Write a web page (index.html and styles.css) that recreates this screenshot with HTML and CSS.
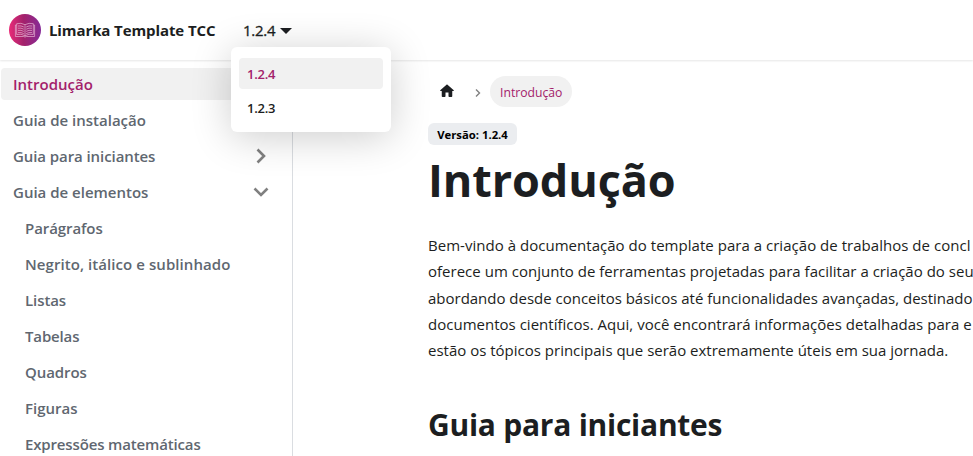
FILE: index.html
```html
<!DOCTYPE html>
<html lang="pt-BR">
<head>
<meta charset="utf-8">
<title>Introdução | Limarka Template TCC</title>
<link rel="stylesheet" href="styles.css">
</head>
<body>
<nav class="navbar">
  <a class="brand">
    <svg class="logo" viewBox="0 0 32 32">
      <defs><linearGradient id="g" x1="0" y1="0" x2="1" y2="0"><stop offset="0" stop-color="#e92b78"/><stop offset=".45" stop-color="#a3216b"/><stop offset="1" stop-color="#862b97"/></linearGradient></defs>
      <circle cx="16" cy="16" r="16" fill="url(#g)"/>
      <g fill="none" stroke="#e6b4d2" stroke-width=".7">
        <path d="M7.500 11H6.400v11.500H14.500q1.500 1 3 0H25.600V11H24.500"/>
        <path d="M16 10.700Q12 8.500 7.700 9.700V20.500Q12 19.300 16 21.800Q20 19.300 24.300 20.500V9.700Q20 8.500 16 10.700Z"/>
        <path d="M16 11.200V21.800M9 12q3-.6 5.800 1M9 14.200q3-.6 5.800 1M9 16.400q3-.6 5.800 1M9 18.600q3-.6 5.800 1M23 12q-3-.6-5.800 1M23 14.200q-3-.6-5.800 1M23 16.400q-3-.6-5.800 1M23 18.600q-3-.6-5.800 1"/>
      </g>
    </svg>
    <b class="title">Limarka Template TCC</b>
  </a>
  <div class="dropdown">
    <a class="version"><span>1.2.4</span><i class="caret"></i></a>
    <ul class="menu">
      <li class="option active">1.2.4</li>
      <li class="option">1.2.3</li>
    </ul>
  </div>
</nav>
<div class="layout">
  <aside class="sidebar">
    <a class="item active"><span>Introdução</span></a>
    <a class="item"><span>Guia de instalação</span></a>
    <a class="item"><span class="snug">Guia para iniciantes</span><svg class="chevron" viewBox="0 0 24 24"><path d="M8.500 5.500l6.500 6.500l-6.500 6.500"/></svg></a>
    <a class="item"><span>Guia de elementos</span><svg class="chevron down" viewBox="0 0 24 24"><path d="M8.500 5.500l6.500 6.500l-6.500 6.500"/></svg></a>
    <div class="children">
      <a class="item"><span class="snug">Parágrafos</span></a>
      <a class="item"><span class="loose">Negrito, itálico e sublinhado</span></a>
      <a class="item"><span class="snug">Listas</span></a>
      <a class="item"><span class="tight">Tabelas</span></a>
      <a class="item"><span class="snug">Quadros</span></a>
      <a class="item"><span>Figuras</span></a>
      <a class="item"><span class="tight">Expressões matemáticas</span></a>
    </div>
  </aside>
  <main class="content">
    <div class="breadcrumbs">
      <svg class="home" viewBox="0 0 24 24"><path d="M10 19v-5h4v5c0 .55.45 1 1 1h3c.55 0 1-.45 1-1v-7h1.700c.46 0 .68-.57.33-.87L12.670 3.600c-.38-.34-.96-.34-1.340 0l-8.360 7.530c-.34.300-.13.870.33.870H5v7c0 .55.45 1 1 1h3c.55 0 1-.45 1-1z"/></svg>
      <svg class="sep" viewBox="0 0 6 8"><path d="M1 .5L4.500 4L1 7.500"/></svg>
      <span class="crumb">Introdução</span>
    </div>
    <span class="badge">Versão: 1.2.4</span>
    <h1>Introdução</h1>
    <p>
      <span class="line l1">Bem-vindo à documentação do template para a criação de trabalhos de concl</span>
      <span class="line l2">oferece um conjunto de ferramentas projetadas para facilitar a criação do seu</span>
      <span class="line l3">abordando desde conceitos básicos até funcionalidades avançadas, destinado</span>
      <span class="line l4">documentos científicos. Aqui, você encontrará informações detalhadas para e</span>
      <span class="line">estão os tópicos principais que serão extremamente úteis em sua jornada.</span>
    </p>
    <h2>Guia para iniciantes</h2>
  </main>
</div>
</body>
</html>
```
FILE: styles.css
```css
* { box-sizing: border-box; }
body { margin: 0; height: 456px; overflow: hidden; background: #fff; color: #1c1e21; font-family: "Open Sans", "Noto Sans", sans-serif; font-size: 15px; }
.navbar { position: relative; z-index: 2; display: flex; align-items: center; height: 60px; padding-left: 9px; box-shadow: 0 1px 2px rgba(0,0,0,.1); background: #fff; }
.brand { display: flex; align-items: center; gap: 8px; width: 234px; }
.logo { width: 32px; height: 32px; }
.title { font-weight: 700; white-space: nowrap; letter-spacing: -.1px; }
.dropdown { position: relative; }
.version { display: flex; align-items: center; gap: 5px; line-height: 24px; letter-spacing: -.25px; -webkit-text-stroke: .3px; }
.caret { border: 6px solid transparent; border-top-color: #1c1e21; border-bottom: 0; margin-top: 2px; }
.menu { position: absolute; left: -12px; top: 29px; width: 160px; height: 85px; margin: 0; padding: 11px 8px 8px; list-style: none; border-radius: 6px; background: #fff; box-shadow: 0 5px 40px rgba(0,0,0,.2); }
.option { height: 31px; margin-bottom: 3px; padding: 0 8px; border-radius: 4px; line-height: 33px; font-size: 13px; font-weight: 600; letter-spacing: -.25px; }
.option.active { background: #f1f1f1; color: #a3216b; }
.layout { display: flex; }
.sidebar { width: 293px; height: 396px; flex: none; padding: 8px 9px 0 1px; border-right: 1px solid #dadde1; }
.item { display: flex; align-items: center; justify-content: space-between; height: 32px; margin-bottom: 4px; padding: 0 10px 0 12px; border-radius: 4px; color: #606770; font-weight: 600; white-space: nowrap; }
.item.active { background: #f1f1f1; color: #a3216b; }
.snug { letter-spacing: -.08px; }
.tight { letter-spacing: -.15px; }
.loose { letter-spacing: .07px; }
.children { padding-left: 12px; }
.chevron { width: 24px; height: 24px; }
.chevron path { fill: none; stroke: #808080; stroke-width: 2.6; }
.down { transform: rotate(90deg); }
.content { flex: none; width: 680px; padding: 16px 0 0 135px; overflow: hidden; }
.breadcrumbs { display: flex; align-items: center; height: 31px; }
.home { width: 18px; height: 18px; margin: -2px 0 0 10px; fill: #1c1e21; }
.sep { width: 6px; height: 8px; margin: 3px 9px 0 19px; }
.sep path { fill: none; stroke: #808080; stroke-width: 1.4; }
.crumb { height: 31px; padding: 0 10px; border-radius: 16px; background: #f1f1f1; color: #a3216b; font-size: 12.200px; line-height: 33px; }
.badge { display: block; width: 89px; height: 22px; margin-top: 16px; border-radius: 6px; background: #ebedf0; color: #000; font-size: 11.300px; font-weight: 700; line-height: 23px; text-align: center; white-space: nowrap; }
h1 { margin: 5px 0 0; font-size: 45px; line-height: 60px; font-weight: 700; letter-spacing: -.1px; }
p { margin: 22px 0 0; line-height: 26.250px; }
.line { display: block; width: max-content; }
.l1 { letter-spacing: .03px; }
.l2 { letter-spacing: .015px; }
.l3 { letter-spacing: -.01px; }
.l4 { letter-spacing: .015px; }
h2 { margin: 41px 0 0; font-size: 30px; line-height: 41px; font-weight: 700; letter-spacing: -.25px; }
```
